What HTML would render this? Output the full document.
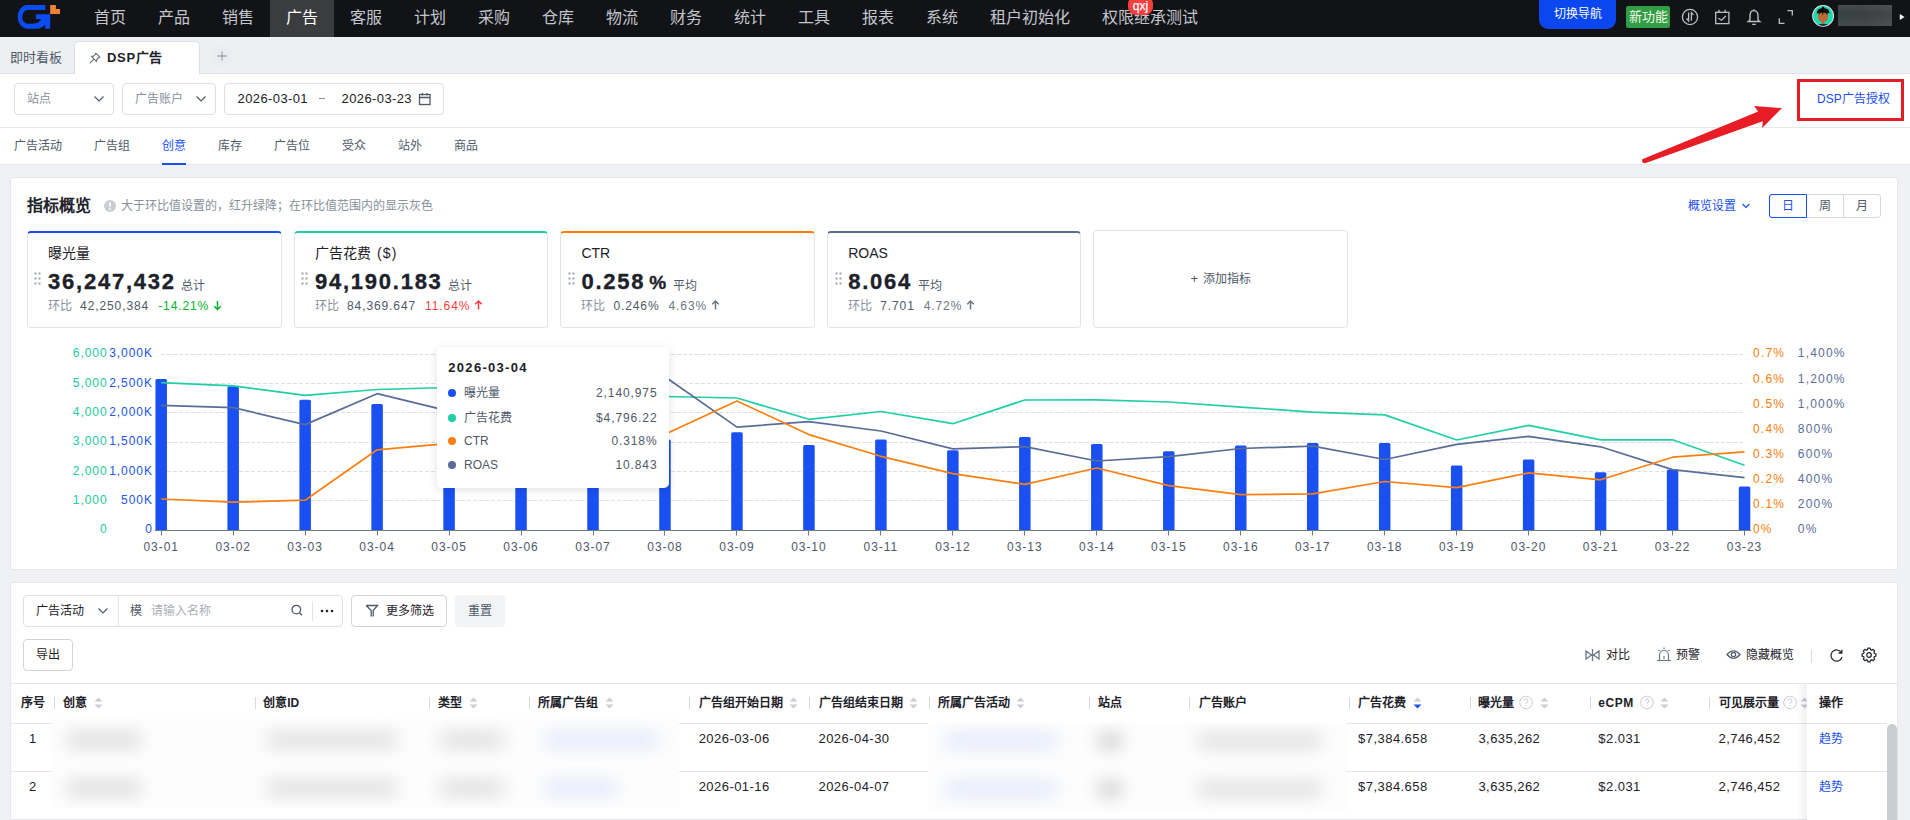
<!DOCTYPE html>
<html lang="zh-CN"><head><meta charset="utf-8">
<style>
*{box-sizing:border-box;margin:0;padding:0}
html,body{width:1910px;height:820px;overflow:hidden}
body{position:relative;background:#f0f1f4;font-family:"Liberation Sans",sans-serif;color:#1d2129;font-size:12px}
.a{position:absolute;white-space:nowrap}
.num{letter-spacing:0.9px}
#nav{position:absolute;left:0;top:0;width:1910px;height:37px;background:#111317}
.ni{position:absolute;top:0;height:37px;line-height:35px;font-size:16px;color:#c3c6cc;text-align:center}
#tabbar{position:absolute;left:0;top:37px;width:1910px;height:37px;background:#edf0f3;border-bottom:1px solid #dfe3e9}
#frow{position:absolute;left:0;top:74px;width:1910px;height:54px;background:#fff;border-bottom:1px solid #e5e6eb}
#stabs{position:absolute;left:0;top:128px;width:1910px;height:37px;background:#fff;border-bottom:1px solid #e5e6eb}
.box{position:absolute;border:1px solid #dcdfe6;border-radius:4px;background:#fff}
.panel{position:absolute;left:10px;width:1888px;background:#fff;border:1px solid #e6e6ec;border-radius:3px}
.card{position:absolute;top:231px;height:97px;width:254px;border:1px solid #e1e4ea;border-radius:4px;background:#fff}
.card .bar{position:absolute;left:-1px;right:-1px;top:-1px;height:2px}
.t12{font-size:12px}
.th{position:absolute;top:693px;height:20px;line-height:20px;font-size:12px;font-weight:bold;color:#1d2129}
.dv{position:absolute;top:697px;width:1px;height:12px;background:#d6d9de}
.big{font-size:22px;line-height:27px;font-weight:bold;color:#1d2129;letter-spacing:1.75px;-webkit-text-stroke:0.35px #1d2129}
.big .pct{font-size:19px;margin-left:4px;letter-spacing:1px}
.big .lab{font-size:12px;font-weight:normal;color:#4e5969;margin-left:5.5px;letter-spacing:0;position:relative;top:0.5px;-webkit-text-stroke:0}
.sub{font-size:12px;line-height:20px}
.td{position:absolute;height:20px;line-height:20px;font-size:13px;color:#1d2129}
</style></head><body>

<!-- NAV -->
<div id="nav">
  <svg class="a" style="left:0;top:0" width="70" height="36" viewBox="0 0 70 36">
    <path fill="#0a4cf2" d="M45.3,5 H27 A10,11.9 0 0 0 27,28.75 H37 C40.5,28.75 43.2,27 45.1,24.2 V28.75 H50.2 V14.3 H35.9 V19.1 H41.2 C39.8,22.2 37,23.7 33,23.7 H27.8 A5.6,6.8 0 0 1 27.8,10.1 H45.3 Z"/>
    <path fill="#f58233" d="M50.2,5 H55.9 V9 H60 V14 H50.2 Z"/>
  </svg>
  <div class="a" style="left:270px;top:0;width:64px;height:37px;background:#3b3c40"></div>
  <div class="ni" style="left:78px;width:64px">首页</div>
  <div class="ni" style="left:142px;width:64px">产品</div>
  <div class="ni" style="left:206px;width:64px">销售</div>
  <div class="ni" style="left:270px;width:64px;color:#fff">广告</div>
  <div class="ni" style="left:334px;width:64px">客服</div>
  <div class="ni" style="left:398px;width:64px">计划</div>
  <div class="ni" style="left:462px;width:64px">采购</div>
  <div class="ni" style="left:526px;width:64px">仓库</div>
  <div class="ni" style="left:590px;width:64px">物流</div>
  <div class="ni" style="left:654px;width:64px">财务</div>
  <div class="ni" style="left:718px;width:64px">统计</div>
  <div class="ni" style="left:782px;width:64px">工具</div>
  <div class="ni" style="left:846px;width:64px">报表</div>
  <div class="ni" style="left:910px;width:64px">系统</div>
  <div class="ni" style="left:974px;width:112px">租户初始化</div>
  <div class="ni" style="left:1086px;width:128px">权限继承测试</div>
  <div class="a" style="left:1128px;top:-4px;width:25px;height:19px;background:#f53f3f;border-radius:8px;color:#fff;font-size:12px;line-height:20px;text-align:center;-webkit-text-stroke:0.25px #fff">qxj</div>
  <div class="a" style="left:1539px;top:0;width:77px;height:29px;background:#0a47f0;border-radius:0 0 9px 9px;color:#fff;font-size:12px;line-height:28px;text-align:center">切换导航</div>
  <div class="a" style="left:1626px;top:6px;width:44px;height:22px;background:#2f9e44;border-radius:2px;color:#f4f7e6;font-size:13px;line-height:22px;text-align:center">新功能</div>
  <svg class="a" style="left:1670px;top:0" width="140" height="36" viewBox="1670 0 140 36" fill="none" stroke="#bdc0c6" stroke-width="1.3">
    <circle cx="1690" cy="17" r="7.6"/>
    <path d="M1688.6,12.6 V20.8 L1686.5,18.5 M1691.4,20.8 V12.6 L1693.5,14.9"/>
    <rect x="1715.7" y="12.3" width="13.2" height="11.3"/>
    <path d="M1718.9,9.8 V12.3 M1725.1,9.8 V12.3 M1718.3,18.2 L1721.6,20.2 L1725.8,16"/>
    <path d="M1754,10.6 C1751.2,10.6 1750,12.8 1750,15.6 V19.2 C1750,20.3 1749,21 1748.3,21.5 H1759.7 C1759,21 1758,20.3 1758,19.2 V15.6 C1758,12.8 1756.8,10.6 1754,10.6 Z M1752.2,24.4 H1755.8 M1754,9.2 V10.6" stroke-width="1.4"/>
    <path d="M1779.3,18.3 V23.3 H1784.5 M1787.4,10.6 H1792.3 V15.6"/>
  </svg>
  <svg class="a" style="left:1810px;top:4px" width="26" height="26" viewBox="0 0 26 26">
    <defs><clipPath id="avc"><circle cx="13.1" cy="11.9" r="10.1"/></clipPath></defs>
    <circle cx="13.1" cy="11.9" r="10.9" fill="#f4f4f4"/>
    <circle cx="13.1" cy="11.9" r="10.1" fill="#20d8b0"/>
    <g clip-path="url(#avc)">
      <path d="M5,21.8 Q13.1,17.6 21.2,21.8 V26 H5 Z" fill="#1b2a5a"/>
      <rect x="11.9" y="15.5" width="2.4" height="4.5" fill="#c0683a"/>
      <ellipse cx="13.05" cy="12.6" rx="5.1" ry="5.6" fill="#c0683a"/>
      <path d="M6.6,9.8 Q7,4.6 11.5,4.2 L13.1,2 L14.7,4.2 Q19.3,4.6 19.6,9.8 L17.6,8.6 L17.8,11 Q15.8,8.2 13.5,8.4 L13,11.5 L12,8.5 Q9.5,8.6 8.5,11 L8.6,8.8 Z" fill="#0c0c0c"/>
    </g>
  </svg>
  <div class="a" style="left:1838px;top:5px;width:54px;height:21px;background:linear-gradient(180deg,rgba(255,255,255,0.06),rgba(0,0,0,0) 40%,rgba(255,255,255,0.05)),linear-gradient(90deg,#384242,#3d3e42 45%,#45464a);filter:blur(0.5px)"></div>
  <svg class="a" style="left:1898px;top:12px" width="10" height="10"><path d="M1.8,2 L6.5,5 L1.8,8 Z" fill="#fff"/></svg>
</div>

<!-- TAB BAR -->
<div id="tabbar">
  <div class="a" style="left:10px;top:11.5px;font-size:13px;line-height:18px;color:#4e5969">即时看板</div>
  <div class="a" style="left:74px;top:4px;width:126px;height:33px;background:#fff;border:1px solid #dcdfe6;border-bottom:none;border-radius:5px 5px 0 0"></div>
  <svg class="a" style="left:89px;top:15px" width="12" height="12" viewBox="0 0 12 12" fill="none" stroke="#6b7280" stroke-width="1.2" stroke-linejoin="round">
    <path d="M6.8,1.2 L10.8,5.2 L9.6,5.6 L7.6,7.8 L7.6,9.6 L2.4,4.4 L4.2,4.4 L6.4,2.4 Z"/><path d="M4.6,7.4 L1.2,10.8" stroke-linecap="round"/>
  </svg>
  <div class="a" style="left:107px;top:11.5px;font-size:13px;line-height:18px;font-weight:bold;color:#1d2129"><span style="letter-spacing:0.7px">DSP</span>广告</div>
  <div class="a" style="left:212px;top:9px;width:20px;height:20px;border-radius:10px;background:#e9ecf0"></div>
  <svg class="a" style="left:216px;top:13px" width="12" height="12"><path d="M6,1.5 V10.5 M1.5,6 H10.5" stroke="#a0a6b0" stroke-width="1.3"/></svg>
</div>

<!-- FILTER ROW -->
<div id="frow">
  <div class="box" style="left:14px;top:9px;width:100px;height:32px"></div>
  <div class="a" style="left:27px;top:16px;line-height:18px;font-size:12px;color:#86909c">站点</div>
  <svg class="a" style="left:93px;top:21px" width="12" height="8"><path d="M1.5,1.5 L6,6 L10.5,1.5" fill="none" stroke="#4e5969" stroke-width="1.2"/></svg>
  <div class="box" style="left:122px;top:9px;width:94px;height:32px"></div>
  <div class="a" style="left:135px;top:16px;line-height:18px;font-size:12px;color:#86909c">广告账户</div>
  <svg class="a" style="left:195px;top:21px" width="12" height="8"><path d="M1.5,1.5 L6,6 L10.5,1.5" fill="none" stroke="#4e5969" stroke-width="1.2"/></svg>
  <div class="box" style="left:224px;top:9px;width:220px;height:32px"></div>
  <div class="a num" style="left:237.5px;top:16px;line-height:18px;font-size:13px;color:#1d2129;letter-spacing:0.4px">2026-03-01</div>
  <div class="a" style="left:318.5px;top:23.5px;width:6px;height:1px;background:#86909c"></div>
  <div class="a num" style="left:341.5px;top:16px;line-height:18px;font-size:13px;color:#1d2129;letter-spacing:0.4px">2026-03-23</div>
  <svg class="a" style="left:418px;top:18px" width="14" height="14" viewBox="0 0 14 14" fill="none" stroke="#4e5969" stroke-width="1.3">
    <rect x="1.5" y="2.5" width="10.5" height="10"/><path d="M1.5,5.5 H12 M4.5,1 V3.5 M9,1 V3.5"/>
  </svg>
  <div class="a" style="left:1797px;top:5px;width:107px;height:42px;border:3px solid #e51e26"></div>
  <div class="a" style="left:1817px;top:16px;line-height:18px;font-size:12px;color:#1a4ff0">DSP广告授权</div>
</div>

<!-- SUB TABS -->
<div id="stabs">
  <div class="a" style="left:14px;top:9px;line-height:18px;font-size:12px;color:#4e5969">广告活动</div>
  <div class="a" style="left:94px;top:9px;line-height:18px;font-size:12px;color:#4e5969">广告组</div>
  <div class="a" style="left:162px;top:9px;line-height:18px;font-size:12px;color:#1a4ff0">创意</div>
  <div class="a" style="left:218px;top:9px;line-height:18px;font-size:12px;color:#4e5969">库存</div>
  <div class="a" style="left:274px;top:9px;line-height:18px;font-size:12px;color:#4e5969">广告位</div>
  <div class="a" style="left:342px;top:9px;line-height:18px;font-size:12px;color:#4e5969">受众</div>
  <div class="a" style="left:398px;top:9px;line-height:18px;font-size:12px;color:#4e5969">站外</div>
  <div class="a" style="left:454px;top:9px;line-height:18px;font-size:12px;color:#4e5969">商品</div>
  <div class="a" style="left:162px;top:35px;width:24px;height:2px;background:#1a4ff0"></div>
</div>

<!-- PANEL 1 -->
<div class="panel" style="top:177px;height:393px"></div>
<div id="p1">
  <div class="a" style="left:27px;top:195px;font-size:16px;line-height:22px;font-weight:bold;color:#1d2129">指标概览</div>
  <svg class="a" style="left:103px;top:199px" width="14" height="14" viewBox="0 0 14 14"><circle cx="7" cy="7" r="6" fill="#c9cdd4"/><path d="M7,3.6 V7.8" stroke="#fff" stroke-width="1.6"/><circle cx="7" cy="10" r="0.9" fill="#fff"/></svg>
  <div class="a" style="left:120.5px;top:197px;font-size:12px;line-height:18px;color:#86909c">大于环比值设置的，红升绿降；在环比值范围内的显示灰色</div>
  <div class="a" style="left:1688px;top:197px;font-size:12px;line-height:18px;color:#1a4ff0">概览设置</div>
  <svg class="a" style="left:1741px;top:202px" width="10" height="8"><path d="M1.5,2 L5,5.5 L8.5,2" fill="none" stroke="#1a4ff0" stroke-width="1.2"/></svg>
  <div class="a" style="left:1769px;top:194px;width:112px;height:24px;border:1px solid #d6d9de;border-radius:3px"></div>
  <div class="a" style="left:1806px;top:194px;width:1px;height:24px;background:#d6d9de"></div>
  <div class="a" style="left:1843px;top:194px;width:1px;height:24px;background:#d6d9de"></div>
  <div class="a" style="left:1769px;top:194px;width:38px;height:24px;border:1.5px solid #1a4ff0;border-radius:3px 0 0 3px"></div>
  <div class="a" style="left:1769px;top:195px;width:38px;line-height:22px;text-align:center;font-size:12px;color:#1a4ff0">日</div>
  <div class="a" style="left:1806px;top:195px;width:37px;line-height:22px;text-align:center;font-size:12px;color:#4e5969">周</div>
  <div class="a" style="left:1843px;top:195px;width:38px;line-height:22px;text-align:center;font-size:12px;color:#4e5969">月</div>
  <div class="card" style="left:27px;width:255px;border-top:2px solid #1a4ff0"></div>
  <div class="a" style="left:48.1px;top:243px;font-size:14px;line-height:20px;color:#1d2129">曝光量</div>
  <svg class="a" style="left:34.4px;top:272px" width="8" height="14" viewBox="0 0 8 14" fill="#9aa1ab"><rect x="0.5" y="0.5" width="2" height="2"/><rect x="4.5" y="0.5" width="2" height="2"/><rect x="0.5" y="5.5" width="2" height="2"/><rect x="4.5" y="5.5" width="2" height="2"/><rect x="0.5" y="10.5" width="2" height="2"/><rect x="4.5" y="10.5" width="2" height="2"/></svg>
  <div class="a big" style="left:48.1px;top:268px">36,247,432<span class="lab">总计</span></div>
  <div class="a sub" style="left:48.1px;top:296px"><span style="color:#86909c">环比</span><span class="num" style="margin-left:8px;color:#4e5969">42,250,384</span><span class="num" style="margin-left:9px;color:#00b42a">-14.21%</span><svg width="9" height="12" viewBox="0 0 9 12" style="margin-left:4px;vertical-align:-1px"><path d="M4.5,2 V10.5 M1.2,7.2 L4.5,10.5 L7.8,7.2" fill="none" stroke="#00b42a" stroke-width="1.5"/></svg></div>
  <div class="card" style="left:294px;width:254px;border-top:2px solid #1ecfa5"></div>
  <div class="a" style="left:315.0px;top:243px;font-size:14px;line-height:20px;color:#1d2129">广告花费 <span style="letter-spacing:1.2px;margin-left:2px">($)</span></div>
  <svg class="a" style="left:301.3px;top:272px" width="8" height="14" viewBox="0 0 8 14" fill="#9aa1ab"><rect x="0.5" y="0.5" width="2" height="2"/><rect x="4.5" y="0.5" width="2" height="2"/><rect x="0.5" y="5.5" width="2" height="2"/><rect x="4.5" y="5.5" width="2" height="2"/><rect x="0.5" y="10.5" width="2" height="2"/><rect x="4.5" y="10.5" width="2" height="2"/></svg>
  <div class="a big" style="left:315.0px;top:268px">94,190.183<span class="lab">总计</span></div>
  <div class="a sub" style="left:315.0px;top:296px"><span style="color:#86909c">环比</span><span class="num" style="margin-left:8px;color:#4e5969">84,369.647</span><span class="num" style="margin-left:9px;color:#f53f3f">11.64%</span><svg width="9" height="12" viewBox="0 0 9 12" style="margin-left:4px;vertical-align:-1px"><path d="M4.5,10.5 V2 M1.2,5.3 L4.5,2 L7.8,5.3" fill="none" stroke="#f53f3f" stroke-width="1.5"/></svg></div>
  <div class="card" style="left:560px;width:255px;border-top:2px solid #ff7d00"></div>
  <div class="a" style="left:581.4px;top:243px;font-size:14px;line-height:20px;color:#1d2129">CTR</div>
  <svg class="a" style="left:567.7px;top:272px" width="8" height="14" viewBox="0 0 8 14" fill="#9aa1ab"><rect x="0.5" y="0.5" width="2" height="2"/><rect x="4.5" y="0.5" width="2" height="2"/><rect x="0.5" y="5.5" width="2" height="2"/><rect x="4.5" y="5.5" width="2" height="2"/><rect x="0.5" y="10.5" width="2" height="2"/><rect x="4.5" y="10.5" width="2" height="2"/></svg>
  <div class="a big" style="left:581.4px;top:268px">0.258<span class="pct">%</span><span class="lab">平均</span></div>
  <div class="a sub" style="left:581.4px;top:296px"><span style="color:#86909c">环比</span><span class="num" style="margin-left:8px;color:#4e5969">0.246%</span><span class="num" style="margin-left:9px;color:#6b7785">4.63%</span><svg width="9" height="12" viewBox="0 0 9 12" style="margin-left:4px;vertical-align:-1px"><path d="M4.5,10.5 V2 M1.2,5.3 L4.5,2 L7.8,5.3" fill="none" stroke="#6b7785" stroke-width="1.5"/></svg></div>
  <div class="card" style="left:827px;width:254px;border-top:2px solid #5a6d98"></div>
  <div class="a" style="left:848.2px;top:243px;font-size:14px;line-height:20px;color:#1d2129">ROAS</div>
  <svg class="a" style="left:834.5px;top:272px" width="8" height="14" viewBox="0 0 8 14" fill="#9aa1ab"><rect x="0.5" y="0.5" width="2" height="2"/><rect x="4.5" y="0.5" width="2" height="2"/><rect x="0.5" y="5.5" width="2" height="2"/><rect x="4.5" y="5.5" width="2" height="2"/><rect x="0.5" y="10.5" width="2" height="2"/><rect x="4.5" y="10.5" width="2" height="2"/></svg>
  <div class="a big" style="left:848.2px;top:268px">8.064<span class="lab">平均</span></div>
  <div class="a sub" style="left:848.2px;top:296px"><span style="color:#86909c">环比</span><span class="num" style="margin-left:8px;color:#4e5969">7.701</span><span class="num" style="margin-left:9px;color:#6b7785">4.72%</span><svg width="9" height="12" viewBox="0 0 9 12" style="margin-left:4px;vertical-align:-1px"><path d="M4.5,10.5 V2 M1.2,5.3 L4.5,2 L7.8,5.3" fill="none" stroke="#6b7785" stroke-width="1.5"/></svg></div>
  <div class="card" style="left:1093px;top:230px;height:98px;width:255px"></div>
  <div class="a" style="left:1190.5px;top:268.5px;font-size:12px;line-height:20px;color:#4e5969"><span style="font-size:13px;margin-right:5px">+</span>添加指标</div>
<svg class="a" style="left:0;top:0" width="1910" height="820" viewBox="0 0 1910 820">
<style>.xl{font-size:12px;fill:#4e5969;letter-spacing:0.95px}.yt{font-size:12px;fill:#1dc9a0;letter-spacing:0.95px}.yb{font-size:12px;fill:#2255e8;letter-spacing:0.95px}.yo{font-size:12px;fill:#fb7d0b;letter-spacing:1.2px}.ys{font-size:12px;fill:#5a6d98;letter-spacing:1.2px}</style>
<line x1="161" y1="354.5" x2="1745" y2="354.5" stroke="#dedfe3" stroke-width="1" stroke-dasharray="4,2"/>
<line x1="161" y1="383.5" x2="1745" y2="383.5" stroke="#dedfe3" stroke-width="1" stroke-dasharray="4,2"/>
<line x1="161" y1="412.5" x2="1745" y2="412.5" stroke="#dedfe3" stroke-width="1" stroke-dasharray="4,2"/>
<line x1="161" y1="442.5" x2="1745" y2="442.5" stroke="#dedfe3" stroke-width="1" stroke-dasharray="4,2"/>
<line x1="161" y1="471.5" x2="1745" y2="471.5" stroke="#dedfe3" stroke-width="1" stroke-dasharray="4,2"/>
<line x1="161" y1="500.5" x2="1745" y2="500.5" stroke="#dedfe3" stroke-width="1" stroke-dasharray="4,2"/>
<path d="M155.45,530 V380.5 Q155.45,379.0 156.95,379.0 H165.45 Q166.95,379.0 166.95,380.5 V530 Z" fill="#1a50f2"/>
<path d="M227.42,530 V387.8 Q227.42,386.3 228.92,386.3 H237.42 Q238.92,386.3 238.92,387.8 V530 Z" fill="#1a50f2"/>
<path d="M299.39,530 V401.3 Q299.39,399.8 300.89,399.8 H309.39 Q310.89,399.8 310.89,401.3 V530 Z" fill="#1a50f2"/>
<path d="M371.36,530 V405.6 Q371.36,404.1 372.86,404.1 H381.36 Q382.86,404.1 382.86,405.6 V530 Z" fill="#1a50f2"/>
<path d="M443.33,530 V426.5 Q443.33,425.0 444.83,425.0 H453.33 Q454.83,425.0 454.83,426.5 V530 Z" fill="#1a50f2"/>
<path d="M515.30,530 V429.5 Q515.30,428.0 516.80,428.0 H525.30 Q526.80,428.0 526.80,429.5 V530 Z" fill="#1a50f2"/>
<path d="M587.27,530 V434.5 Q587.27,433.0 588.77,433.0 H597.27 Q598.77,433.0 598.77,434.5 V530 Z" fill="#1a50f2"/>
<path d="M659.24,530 V441.0 Q659.24,439.5 660.74,439.5 H669.24 Q670.74,439.5 670.74,441.0 V530 Z" fill="#1a50f2"/>
<path d="M731.21,530 V433.7 Q731.21,432.2 732.71,432.2 H741.21 Q742.71,432.2 742.71,433.7 V530 Z" fill="#1a50f2"/>
<path d="M803.18,530 V446.4 Q803.18,444.9 804.68,444.9 H813.18 Q814.68,444.9 814.68,446.4 V530 Z" fill="#1a50f2"/>
<path d="M875.15,530 V441.0 Q875.15,439.5 876.65,439.5 H885.15 Q886.65,439.5 886.65,441.0 V530 Z" fill="#1a50f2"/>
<path d="M947.12,530 V451.7 Q947.12,450.2 948.62,450.2 H957.12 Q958.62,450.2 958.62,451.7 V530 Z" fill="#1a50f2"/>
<path d="M1019.09,530 V438.6 Q1019.09,437.1 1020.59,437.1 H1029.09 Q1030.59,437.1 1030.59,438.6 V530 Z" fill="#1a50f2"/>
<path d="M1091.06,530 V445.4 Q1091.06,443.9 1092.56,443.9 H1101.06 Q1102.56,443.9 1102.56,445.4 V530 Z" fill="#1a50f2"/>
<path d="M1163.03,530 V452.7 Q1163.03,451.2 1164.53,451.2 H1173.03 Q1174.53,451.2 1174.53,452.7 V530 Z" fill="#1a50f2"/>
<path d="M1235.00,530 V446.9 Q1235.00,445.4 1236.50,445.4 H1245.00 Q1246.50,445.4 1246.50,446.9 V530 Z" fill="#1a50f2"/>
<path d="M1306.97,530 V444.4 Q1306.97,442.9 1308.47,442.9 H1316.97 Q1318.47,442.9 1318.47,444.4 V530 Z" fill="#1a50f2"/>
<path d="M1378.94,530 V444.4 Q1378.94,442.9 1380.44,442.9 H1388.94 Q1390.44,442.9 1390.44,444.4 V530 Z" fill="#1a50f2"/>
<path d="M1450.91,530 V467.1 Q1450.91,465.6 1452.41,465.6 H1460.91 Q1462.41,465.6 1462.41,467.1 V530 Z" fill="#1a50f2"/>
<path d="M1522.88,530 V461.0 Q1522.88,459.5 1524.38,459.5 H1532.88 Q1534.38,459.5 1534.38,461.0 V530 Z" fill="#1a50f2"/>
<path d="M1594.85,530 V473.7 Q1594.85,472.2 1596.35,472.2 H1604.85 Q1606.35,472.2 1606.35,473.7 V530 Z" fill="#1a50f2"/>
<path d="M1666.82,530 V471.1 Q1666.82,469.6 1668.32,469.6 H1676.82 Q1678.32,469.6 1678.32,471.1 V530 Z" fill="#1a50f2"/>
<path d="M1738.79,530 V488.0 Q1738.79,486.5 1740.29,486.5 H1748.79 Q1750.29,486.5 1750.29,488.0 V530 Z" fill="#1a50f2"/>
<line x1="155" y1="530.5" x2="1751" y2="530.5" stroke="#6e7a8a" stroke-width="1"/>
<line x1="161.5" y1="530.5" x2="161.5" y2="535.5" stroke="#6e7a8a" stroke-width="1"/>
<line x1="233.5" y1="530.5" x2="233.5" y2="535.5" stroke="#6e7a8a" stroke-width="1"/>
<line x1="305.5" y1="530.5" x2="305.5" y2="535.5" stroke="#6e7a8a" stroke-width="1"/>
<line x1="377.5" y1="530.5" x2="377.5" y2="535.5" stroke="#6e7a8a" stroke-width="1"/>
<line x1="449.5" y1="530.5" x2="449.5" y2="535.5" stroke="#6e7a8a" stroke-width="1"/>
<line x1="521.5" y1="530.5" x2="521.5" y2="535.5" stroke="#6e7a8a" stroke-width="1"/>
<line x1="593.5" y1="530.5" x2="593.5" y2="535.5" stroke="#6e7a8a" stroke-width="1"/>
<line x1="664.5" y1="530.5" x2="664.5" y2="535.5" stroke="#6e7a8a" stroke-width="1"/>
<line x1="736.5" y1="530.5" x2="736.5" y2="535.5" stroke="#6e7a8a" stroke-width="1"/>
<line x1="808.5" y1="530.5" x2="808.5" y2="535.5" stroke="#6e7a8a" stroke-width="1"/>
<line x1="880.5" y1="530.5" x2="880.5" y2="535.5" stroke="#6e7a8a" stroke-width="1"/>
<line x1="952.5" y1="530.5" x2="952.5" y2="535.5" stroke="#6e7a8a" stroke-width="1"/>
<line x1="1024.5" y1="530.5" x2="1024.5" y2="535.5" stroke="#6e7a8a" stroke-width="1"/>
<line x1="1096.5" y1="530.5" x2="1096.5" y2="535.5" stroke="#6e7a8a" stroke-width="1"/>
<line x1="1168.5" y1="530.5" x2="1168.5" y2="535.5" stroke="#6e7a8a" stroke-width="1"/>
<line x1="1240.5" y1="530.5" x2="1240.5" y2="535.5" stroke="#6e7a8a" stroke-width="1"/>
<line x1="1312.5" y1="530.5" x2="1312.5" y2="535.5" stroke="#6e7a8a" stroke-width="1"/>
<line x1="1384.5" y1="530.5" x2="1384.5" y2="535.5" stroke="#6e7a8a" stroke-width="1"/>
<line x1="1456.5" y1="530.5" x2="1456.5" y2="535.5" stroke="#6e7a8a" stroke-width="1"/>
<line x1="1528.5" y1="530.5" x2="1528.5" y2="535.5" stroke="#6e7a8a" stroke-width="1"/>
<line x1="1600.5" y1="530.5" x2="1600.5" y2="535.5" stroke="#6e7a8a" stroke-width="1"/>
<line x1="1672.5" y1="530.5" x2="1672.5" y2="535.5" stroke="#6e7a8a" stroke-width="1"/>
<line x1="1744.5" y1="530.5" x2="1744.5" y2="535.5" stroke="#6e7a8a" stroke-width="1"/>
<polyline points="161.2,382.7 233.2,385.9 305.1,395.4 377.1,389.5 449.1,387.5 521.0,391.0 593.0,394.0 665.0,396.5 737.0,398.0 808.9,419.3 880.9,411.5 952.9,423.7 1024.8,400.0 1096.8,399.8 1168.8,402.0 1240.8,407.1 1312.7,412.1 1384.7,414.9 1456.7,440.0 1528.6,425.4 1600.6,439.9 1672.6,439.8 1744.5,465.3" fill="none" stroke="#20cfa6" stroke-width="1.7" stroke-linejoin="round"/>
<polyline points="161.2,405.4 233.2,407.6 305.1,424.6 377.1,393.7 449.1,411.2 521.0,400.0 593.0,385.0 665.0,376.8 737.0,427.1 808.9,421.7 880.9,431.0 952.9,448.8 1024.8,446.6 1096.8,461.0 1168.8,456.6 1240.8,448.5 1312.7,446.1 1384.7,459.5 1456.7,444.4 1528.6,436.3 1600.6,446.8 1672.6,469.6 1744.5,477.6" fill="none" stroke="#5a6d98" stroke-width="1.7" stroke-linejoin="round"/>
<polyline points="161.2,499.0 233.2,502.2 305.1,500.2 377.1,449.8 449.1,443.3 521.0,440.0 593.0,437.0 665.0,434.2 737.0,401.0 808.9,434.6 880.9,456.3 952.9,473.7 1024.8,484.4 1096.8,468.0 1168.8,485.6 1240.8,494.6 1312.7,493.9 1384.7,481.5 1456.7,487.6 1528.6,472.9 1600.6,479.8 1672.6,457.2 1744.5,451.9" fill="none" stroke="#fb7f0f" stroke-width="1.7" stroke-linejoin="round"/>
<text x="161.2" y="550.5" text-anchor="middle" class="xl">03-01</text>
<text x="233.2" y="550.5" text-anchor="middle" class="xl">03-02</text>
<text x="305.1" y="550.5" text-anchor="middle" class="xl">03-03</text>
<text x="377.1" y="550.5" text-anchor="middle" class="xl">03-04</text>
<text x="449.1" y="550.5" text-anchor="middle" class="xl">03-05</text>
<text x="521.0" y="550.5" text-anchor="middle" class="xl">03-06</text>
<text x="593.0" y="550.5" text-anchor="middle" class="xl">03-07</text>
<text x="665.0" y="550.5" text-anchor="middle" class="xl">03-08</text>
<text x="737.0" y="550.5" text-anchor="middle" class="xl">03-09</text>
<text x="808.9" y="550.5" text-anchor="middle" class="xl">03-10</text>
<text x="880.9" y="550.5" text-anchor="middle" class="xl">03-11</text>
<text x="952.9" y="550.5" text-anchor="middle" class="xl">03-12</text>
<text x="1024.8" y="550.5" text-anchor="middle" class="xl">03-13</text>
<text x="1096.8" y="550.5" text-anchor="middle" class="xl">03-14</text>
<text x="1168.8" y="550.5" text-anchor="middle" class="xl">03-15</text>
<text x="1240.8" y="550.5" text-anchor="middle" class="xl">03-16</text>
<text x="1312.7" y="550.5" text-anchor="middle" class="xl">03-17</text>
<text x="1384.7" y="550.5" text-anchor="middle" class="xl">03-18</text>
<text x="1456.7" y="550.5" text-anchor="middle" class="xl">03-19</text>
<text x="1528.6" y="550.5" text-anchor="middle" class="xl">03-20</text>
<text x="1600.6" y="550.5" text-anchor="middle" class="xl">03-21</text>
<text x="1672.6" y="550.5" text-anchor="middle" class="xl">03-22</text>
<text x="1744.5" y="550.5" text-anchor="middle" class="xl">03-23</text>
<text x="107.6" y="357.1" text-anchor="end" class="yt">6,000</text>
<text x="152.9" y="357.1" text-anchor="end" class="yb">3,000K</text>
<text x="107.6" y="386.7" text-anchor="end" class="yt">5,000</text>
<text x="152.9" y="386.7" text-anchor="end" class="yb">2,500K</text>
<text x="107.6" y="416.1" text-anchor="end" class="yt">4,000</text>
<text x="152.9" y="416.1" text-anchor="end" class="yb">2,000K</text>
<text x="107.6" y="444.9" text-anchor="end" class="yt">3,000</text>
<text x="152.9" y="444.9" text-anchor="end" class="yb">1,500K</text>
<text x="107.6" y="474.5" text-anchor="end" class="yt">2,000</text>
<text x="152.9" y="474.5" text-anchor="end" class="yb">1,000K</text>
<text x="107.6" y="503.9" text-anchor="end" class="yt">1,000</text>
<text x="152.9" y="503.9" text-anchor="end" class="yb">500K</text>
<text x="107.6" y="532.7" text-anchor="end" class="yt">0</text>
<text x="152.9" y="532.7" text-anchor="end" class="yb">0</text>
<text x="1753" y="357.2" class="yo">0.7%</text>
<text x="1797.8" y="357.2" class="ys">1,400%</text>
<text x="1753" y="383.2" class="yo">0.6%</text>
<text x="1797.8" y="383.2" class="ys">1,200%</text>
<text x="1753" y="408.1" class="yo">0.5%</text>
<text x="1797.8" y="408.1" class="ys">1,000%</text>
<text x="1753" y="432.8" class="yo">0.4%</text>
<text x="1797.8" y="432.8" class="ys">800%</text>
<text x="1753" y="457.8" class="yo">0.3%</text>
<text x="1797.8" y="457.8" class="ys">600%</text>
<text x="1753" y="483.0" class="yo">0.2%</text>
<text x="1797.8" y="483.0" class="ys">400%</text>
<text x="1753" y="507.9" class="yo">0.1%</text>
<text x="1797.8" y="507.9" class="ys">200%</text>
<text x="1753" y="532.9" class="yo">0%</text>
<text x="1797.8" y="532.9" class="ys">0%</text>
</svg>
  <div class="a" style="left:437px;top:347px;width:231.5px;height:141px;background:#fff;border-radius:5px;box-shadow:0 2px 10px rgba(0,0,0,0.12)"></div>
  <div class="a num" style="left:448.3px;top:359px;font-size:13px;line-height:18px;font-weight:bold;color:#1d2129;letter-spacing:1.3px">2026-03-04</div>
  <div class="a" style="left:448px;top:389.2px;width:8px;height:8px;border-radius:4px;background:#1a50f2"></div>
  <div class="a" style="left:464px;top:383.2px;font-size:12px;line-height:20px;color:#4e5969">曝光量</div>
  <div class="a num" style="right:1252.5px;top:383.2px;font-size:12px;line-height:20px;color:#4e5969">2,140,975</div>
  <div class="a" style="left:448px;top:413.6px;width:8px;height:8px;border-radius:4px;background:#20cfa6"></div>
  <div class="a" style="left:464px;top:407.6px;font-size:12px;line-height:20px;color:#4e5969">广告花费</div>
  <div class="a num" style="right:1252.5px;top:407.6px;font-size:12px;line-height:20px;color:#4e5969">$4,796.22</div>
  <div class="a" style="left:448px;top:436.7px;width:8px;height:8px;border-radius:4px;background:#fb7f0f"></div>
  <div class="a" style="left:464px;top:430.7px;font-size:12px;line-height:20px;color:#4e5969">CTR</div>
  <div class="a num" style="right:1252.5px;top:430.7px;font-size:12px;line-height:20px;color:#4e5969">0.318%</div>
  <div class="a" style="left:448px;top:461.1px;width:8px;height:8px;border-radius:4px;background:#5a6d98"></div>
  <div class="a" style="left:464px;top:455.1px;font-size:12px;line-height:20px;color:#4e5969">ROAS</div>
  <div class="a num" style="right:1252.5px;top:455.1px;font-size:12px;line-height:20px;color:#4e5969">10.843</div>
</div>

<!-- PANEL 2 -->
<div class="panel" style="top:582px;height:260px"></div>
<div id="p2">
  <div class="box" style="left:23px;top:595px;width:320px;height:32px"></div>
  <div class="a" style="left:118px;top:596px;width:1px;height:30px;background:#e0e3e8"></div>
  <div class="a" style="left:36px;top:602px;font-size:12px;line-height:18px;color:#1d2129">广告活动</div>
  <svg class="a" style="left:97px;top:607px" width="12" height="8"><path d="M1.5,1.5 L6,6 L10.5,1.5" fill="none" stroke="#4e5969" stroke-width="1.2"/></svg>
  <div class="a" style="left:129.5px;top:602px;font-size:12px;line-height:18px;color:#4e5969">模</div>
  <div class="a" style="left:151px;top:602px;font-size:12px;line-height:18px;color:#a9aeb8">请输入名称</div>
  <svg class="a" style="left:290px;top:603px" width="14" height="14" viewBox="0 0 14 14" fill="none" stroke="#4e5969" stroke-width="1.3"><circle cx="6.3" cy="6.6" r="4.3"/><path d="M9.5,9.8 L12,12.3"/></svg>
  <div class="a" style="left:311.5px;top:601px;width:1px;height:20px;background:#e0e3e8"></div>
  <svg class="a" style="left:320px;top:608px" width="14" height="6"><circle cx="2" cy="3" r="1.3" fill="#1d2129"/><circle cx="7" cy="3" r="1.3" fill="#1d2129"/><circle cx="12" cy="3" r="1.3" fill="#1d2129"/></svg>
  <div class="box" style="left:351px;top:595px;width:96px;height:32px;border-color:#d0d4da"></div>
  <svg class="a" style="left:365px;top:604px" width="14" height="14" viewBox="0 0 14 14" fill="none" stroke="#4e5969" stroke-width="1.3"><path d="M1.2,1.5 H12.5 L8.2,6.5 V12.5 M6.2,12.5 V6.5 L1.2,1.5"/></svg>
  <div class="a" style="left:386px;top:602px;font-size:12px;line-height:18px;color:#1d2129">更多筛选</div>
  <div class="a" style="left:455px;top:595px;width:50px;height:32px;background:#f2f3f5;border-radius:4px"></div>
  <div class="a" style="left:468px;top:602px;font-size:12px;line-height:18px;color:#4e5969">重置</div>
  <div class="box" style="left:23px;top:639px;width:50px;height:32px;border-color:#d0d4da"></div>
  <div class="a" style="left:36px;top:646px;font-size:12px;line-height:18px;color:#1d2129">导出</div>

  <svg class="a" style="left:1584px;top:648px" width="17" height="14" viewBox="0 0 17 14" fill="none" stroke="#6b7785" stroke-width="1.3"><path d="M2,3 V11 L7.5,7 Z M15,3 V11 L9.5,7 Z M8.5,1 V13"/></svg>
  <div class="a" style="left:1605.5px;top:646px;font-size:12px;line-height:18px;color:#1d2129">对比</div>
  <svg class="a" style="left:1656px;top:646px" width="16" height="16" viewBox="0 0 16 16" fill="none" stroke="#6b7785" stroke-width="1.2"><path d="M1,14.5 H15 M3.5,14.5 V9 A4.5,4.5 0 0 1 12.5,9 V14.5 M8,10 V13 M8,1.5 V3 M2.5,4 L3.5,5 M13.5,4 L12.5,5"/></svg>
  <div class="a" style="left:1676px;top:646px;font-size:12px;line-height:18px;color:#1d2129">预警</div>
  <svg class="a" style="left:1726px;top:648px" width="15" height="13" viewBox="0 0 15 13" fill="none" stroke="#4e5969" stroke-width="1.2"><path d="M1,6.5 Q7.5,-1 14,6.5 Q7.5,14 1,6.5 Z"/><circle cx="7.5" cy="6.5" r="2.2"/></svg>
  <div class="a" style="left:1746px;top:646px;font-size:12px;line-height:18px;color:#1d2129">隐藏概览</div>
  <div class="a" style="left:1811px;top:649.5px;width:1px;height:13px;background:#d6d9de"></div>
  <svg class="a" style="left:1829px;top:648px" width="15" height="15" viewBox="0 0 15 15" fill="none" stroke="#1d2129" stroke-width="1.15"><path d="M12.3,4.5 A5.6,5.6 0 1 0 13,9"/><path d="M12.8,1.8 V5 H9.6" stroke-width="1.3"/></svg>
  <svg class="a" style="left:1861px;top:647px" width="16" height="16" viewBox="0 0 16 16" fill="none" stroke="#1d2129" stroke-width="1.2" stroke-linejoin="round"><path d="M14.91,6.85 L14.91,9.15 L13.40,9.48 L12.86,10.77 L13.70,12.07 L12.07,13.70 L10.77,12.86 L9.48,13.40 L9.15,14.91 L6.85,14.91 L6.52,13.40 L5.23,12.86 L3.93,13.70 L2.30,12.07 L3.14,10.77 L2.60,9.48 L1.09,9.15 L1.09,6.85 L2.60,6.52 L3.14,5.23 L2.30,3.93 L3.93,2.30 L5.23,3.14 L6.52,2.60 L6.85,1.09 L9.15,1.09 L9.48,2.60 L10.77,3.14 L12.07,2.30 L13.70,3.93 L12.86,5.23 L13.40,6.52 Z"/><circle cx="8" cy="8" r="2.3"/></svg>

  <div class="a" style="left:11px;top:683px;width:1886px;height:1px;background:#e5e6eb"></div>
  <div class="a" style="left:11px;top:723px;width:1876px;height:1px;background:#e5e6eb"></div>
  <div class="a" style="left:11px;top:771px;width:1876px;height:1px;background:#e5e6eb"></div>
  <div class="a" style="left:11px;top:819px;width:1876px;height:1px;background:#e5e6eb"></div>
  <div class="dv" style="left:54.4px"></div>
  <div class="dv" style="left:254.5px"></div>
  <div class="dv" style="left:429.4px"></div>
  <div class="dv" style="left:529.3px"></div>
  <div class="dv" style="left:689.3px"></div>
  <div class="dv" style="left:809.3px"></div>
  <div class="dv" style="left:929.1px"></div>
  <div class="dv" style="left:1089.3px"></div>
  <div class="dv" style="left:1189.3px"></div>
  <div class="dv" style="left:1349.3px"></div>
  <div class="dv" style="left:1469.5px"></div>
  <div class="dv" style="left:1589.6px"></div>
  <div class="dv" style="left:1709.3px"></div>
  <div class="th" style="left:21px">序号</div>
  <div class="th" style="left:62.9px">创意</div>
  <svg class="a" style="left:93.7px;top:696px" width="9" height="14" viewBox="0 0 9 14"><path d="M0.5,5.5 L4.5,1.5 L8.5,5.5 Z" fill="#c9cdd4"/><path d="M0.5,8.5 L4.5,12.5 L8.5,8.5 Z" fill="#c9cdd4"/></svg>
  <div class="th" style="left:263.2px">创意ID</div>
  <div class="th" style="left:438.4px">类型</div>
  <svg class="a" style="left:468.8px;top:696px" width="9" height="14" viewBox="0 0 9 14"><path d="M0.5,5.5 L4.5,1.5 L8.5,5.5 Z" fill="#c9cdd4"/><path d="M0.5,8.5 L4.5,12.5 L8.5,8.5 Z" fill="#c9cdd4"/></svg>
  <div class="th" style="left:538.3px">所属广告组</div>
  <svg class="a" style="left:604.5px;top:696px" width="9" height="14" viewBox="0 0 9 14"><path d="M0.5,5.5 L4.5,1.5 L8.5,5.5 Z" fill="#c9cdd4"/><path d="M0.5,8.5 L4.5,12.5 L8.5,8.5 Z" fill="#c9cdd4"/></svg>
  <div class="th" style="left:698.7px">广告组开始日期</div>
  <svg class="a" style="left:788.8px;top:696px" width="9" height="14" viewBox="0 0 9 14"><path d="M0.5,5.5 L4.5,1.5 L8.5,5.5 Z" fill="#c9cdd4"/><path d="M0.5,8.5 L4.5,12.5 L8.5,8.5 Z" fill="#c9cdd4"/></svg>
  <div class="th" style="left:818.5px">广告组结束日期</div>
  <svg class="a" style="left:908.7px;top:696px" width="9" height="14" viewBox="0 0 9 14"><path d="M0.5,5.5 L4.5,1.5 L8.5,5.5 Z" fill="#c9cdd4"/><path d="M0.5,8.5 L4.5,12.5 L8.5,8.5 Z" fill="#c9cdd4"/></svg>
  <div class="th" style="left:938.4px">所属广告活动</div>
  <svg class="a" style="left:1016.4px;top:696px" width="9" height="14" viewBox="0 0 9 14"><path d="M0.5,5.5 L4.5,1.5 L8.5,5.5 Z" fill="#c9cdd4"/><path d="M0.5,8.5 L4.5,12.5 L8.5,8.5 Z" fill="#c9cdd4"/></svg>
  <div class="th" style="left:1098px">站点</div>
  <div class="th" style="left:1198.7px">广告账户</div>
  <div class="th" style="left:1358.1px">广告花费</div>
  <svg class="a" style="left:1412.5px;top:696px" width="9" height="14" viewBox="0 0 9 14"><path d="M0.5,5.5 L4.5,1.5 L8.5,5.5 Z" fill="#c9cdd4"/><path d="M0.5,8.5 L4.5,12.5 L8.5,8.5 Z" fill="#1a4ff0"/></svg>
  <div class="th" style="left:1478.4px">曝光量</div>
  <svg class="a" style="left:1518.9px;top:695px" width="15" height="15" viewBox="0 0 15 15"><circle cx="7" cy="7.5" r="6.3" fill="none" stroke="#c9cdd4" stroke-width="1"/><path d="M5.2,5.8 A1.9,1.9 0 1 1 7.2,7.6 V8.8" fill="none" stroke="#c9cdd4" stroke-width="1"/><circle cx="7.2" cy="10.6" r="0.6" fill="#c9cdd4"/></svg>
  <svg class="a" style="left:1540px;top:696px" width="9" height="14" viewBox="0 0 9 14"><path d="M0.5,5.5 L4.5,1.5 L8.5,5.5 Z" fill="#c9cdd4"/><path d="M0.5,8.5 L4.5,12.5 L8.5,8.5 Z" fill="#c9cdd4"/></svg>
  <div class="th" style="left:1598.3px;letter-spacing:0.5px">eCPM</div>
  <svg class="a" style="left:1640.3px;top:695px" width="15" height="15" viewBox="0 0 15 15"><circle cx="7" cy="7.5" r="6.3" fill="none" stroke="#c9cdd4" stroke-width="1"/><path d="M5.2,5.8 A1.9,1.9 0 1 1 7.2,7.6 V8.8" fill="none" stroke="#c9cdd4" stroke-width="1"/><circle cx="7.2" cy="10.6" r="0.6" fill="#c9cdd4"/></svg>
  <svg class="a" style="left:1660px;top:696px" width="9" height="14" viewBox="0 0 9 14"><path d="M0.5,5.5 L4.5,1.5 L8.5,5.5 Z" fill="#c9cdd4"/><path d="M0.5,8.5 L4.5,12.5 L8.5,8.5 Z" fill="#c9cdd4"/></svg>
  <div class="th" style="left:1718.5px">可见展示量</div>
  <svg class="a" style="left:1783.3px;top:695px" width="15" height="15" viewBox="0 0 15 15"><circle cx="7" cy="7.5" r="6.3" fill="none" stroke="#c9cdd4" stroke-width="1"/><path d="M5.2,5.8 A1.9,1.9 0 1 1 7.2,7.6 V8.8" fill="none" stroke="#c9cdd4" stroke-width="1"/><circle cx="7.2" cy="10.6" r="0.6" fill="#c9cdd4"/></svg>
  <svg class="a" style="left:1800px;top:696px" width="9" height="14" viewBox="0 0 9 14"><path d="M0.5,5.5 L4.5,1.5 L8.5,5.5 Z" fill="#c9cdd4"/><path d="M0.5,8.5 L4.5,12.5 L8.5,8.5 Z" fill="#c9cdd4"/></svg>
  <div class="a" style="left:1796px;top:684px;width:11px;height:136px;background:linear-gradient(90deg,rgba(0,0,0,0),rgba(0,0,0,0.06))"></div>
  <div class="a" style="left:1807px;top:684px;width:80px;height:136px;background:#fff"></div>
  <div class="a" style="left:1807px;top:723px;width:80px;height:1px;background:#e5e6eb"></div>
  <div class="a" style="left:1807px;top:771px;width:80px;height:1px;background:#e5e6eb"></div>
  <div class="th" style="left:1818.9px">操作</div>
  <div class="a" style="left:1887px;top:724px;width:10px;height:96px;background:#c9cdd4;border-radius:5px 5px 0 0"></div>
  <div class="td num" style="left:29px;top:728.5px;width:8px;text-align:center">1</div>
  <div class="td num" style="left:698.7px;top:728.5px;letter-spacing:0.45px">2026-03-06</div>
  <div class="td num" style="left:818.5px;top:728.5px;letter-spacing:0.45px">2026-04-30</div>
  <div class="td num" style="left:1358.1px;top:728.5px;letter-spacing:0.45px">$7,384.658</div>
  <div class="td num" style="left:1478.4px;top:728.5px;letter-spacing:0.45px">3,635,262</div>
  <div class="td num" style="left:1598.3px;top:728.5px;letter-spacing:0.45px">$2.031</div>
  <div class="td num" style="left:1718.5px;top:728.5px;letter-spacing:0.45px">2,746,452</div>
  <div class="td" style="left:1818.9px;top:728.5px;font-size:12px;color:#1a4ff0">趋势</div>
  <div class="td num" style="left:29px;top:776.6px;width:8px;text-align:center">2</div>
  <div class="td num" style="left:698.7px;top:776.6px;letter-spacing:0.45px">2026-01-16</div>
  <div class="td num" style="left:818.5px;top:776.6px;letter-spacing:0.45px">2026-04-07</div>
  <div class="td num" style="left:1358.1px;top:776.6px;letter-spacing:0.45px">$7,384.658</div>
  <div class="td num" style="left:1478.4px;top:776.6px;letter-spacing:0.45px">3,635,262</div>
  <div class="td num" style="left:1598.3px;top:776.6px;letter-spacing:0.45px">$2.031</div>
  <div class="td num" style="left:1718.5px;top:776.6px;letter-spacing:0.45px">2,746,452</div>
  <div class="td" style="left:1818.9px;top:776.6px;font-size:12px;color:#1a4ff0">趋势</div>
  <div class="a" style="left:51px;top:719px;width:628px;height:89px;background:#fdfdfd;overflow:hidden">
    <div class="a" style="left:17px;top:16px;width:72px;height:10px;background:#cbcbcb;filter:blur(9px)"></div>
    <div class="a" style="left:217px;top:16px;width:128px;height:10px;background:#cecece;filter:blur(9px)"></div>
    <div class="a" style="left:390px;top:16px;width:62px;height:10px;background:#cdcdcd;filter:blur(9px)"></div>
    <div class="a" style="left:494px;top:16px;width:113px;height:10px;background:#d3def9;filter:blur(9px)"></div>
    <div class="a" style="left:17px;top:64px;width:72px;height:10px;background:#cbcbcb;filter:blur(9px)"></div>
    <div class="a" style="left:217px;top:64px;width:128px;height:10px;background:#cecece;filter:blur(9px)"></div>
    <div class="a" style="left:390px;top:64px;width:62px;height:10px;background:#cdcdcd;filter:blur(9px)"></div>
    <div class="a" style="left:494px;top:64px;width:72px;height:10px;background:#d3def9;filter:blur(9px)"></div>
  </div>
  <div class="a" style="left:928px;top:723px;width:418px;height:89px;background:#fdfdfd;overflow:hidden">
    <div class="a" style="left:17px;top:13px;width:111px;height:10px;background:#d3def9;filter:blur(9px)"></div>
    <div class="a" style="left:171px;top:13px;width:22px;height:10px;background:#b4b4b4;filter:blur(9px)"></div>
    <div class="a" style="left:271px;top:13px;width:121px;height:10px;background:#cfcfcf;filter:blur(9px)"></div>
    <div class="a" style="left:17px;top:61px;width:111px;height:10px;background:#d3def9;filter:blur(9px)"></div>
    <div class="a" style="left:171px;top:61px;width:22px;height:10px;background:#b4b4b4;filter:blur(9px)"></div>
    <div class="a" style="left:271px;top:61px;width:121px;height:10px;background:#cfcfcf;filter:blur(9px)"></div>
  </div>
</div>

<!-- ARROW -->
<svg class="a" style="left:0;top:0" width="1910" height="820" viewBox="0 0 1910 820">
  <path fill="#e81c24" d="M1642.3,159.3 L1758.2,111.4 L1754.1,106 L1782,108.1 L1762.2,127.9 L1762.8,121.2 L1645,163.3 Q1641.3,163.2 1642.3,159.3 Z"/>
</svg>
</body></html>
